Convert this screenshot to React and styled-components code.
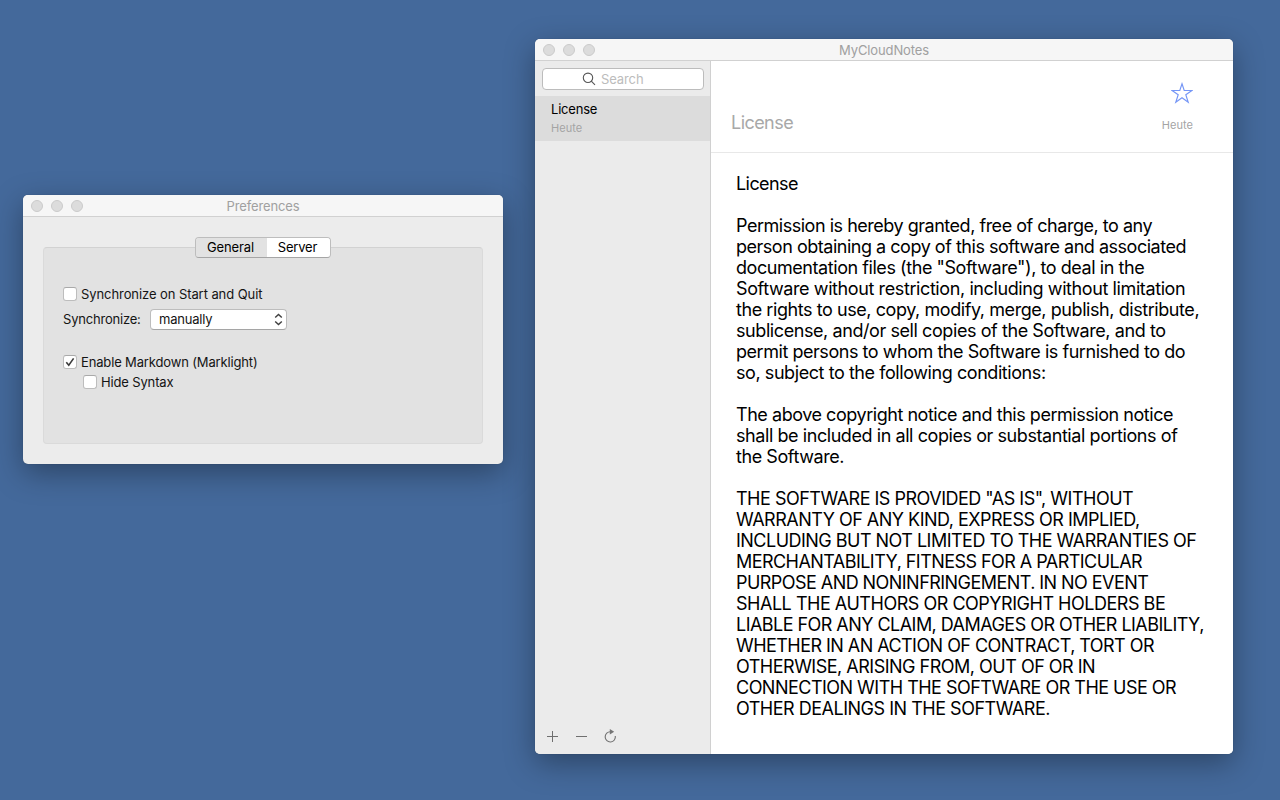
import React from 'react';
import styled, { createGlobalStyle } from 'styled-components';

const GlobalStyle = createGlobalStyle`
  * { box-sizing: border-box; }
  body {
    margin: 0;
    background: #44699b;
    font-family: Inter, "Liberation Sans", sans-serif;
    font-size: 13px;
    color: #000;
    overflow: hidden;
  }
`;

const Desktop = styled.main`
  position: relative;
  width: 1280px;
  height: 800px;
  background: #44699b;
  overflow: hidden;
`;

const Window = styled.section`
  position: absolute;
  left: ${(p) => p.$x}px;
  top: ${(p) => p.$y}px;
  width: ${(p) => p.$w}px;
  height: ${(p) => p.$h}px;
  display: flex;
  flex-direction: column;
  background: #ececec;
  border-radius: 5px;
  box-shadow: 0 0 1px rgba(0, 0, 0, 0.3), 0 9px 30px rgba(0, 0, 0, 0.34);
`;

const TitleBar = styled.header`
  flex: none;
  height: 22px;
  display: grid;
  grid-template-columns: 60px 1fr 60px;
  align-items: center;
  background: #f6f6f6;
  border-bottom: 1px solid #d1d1d1;
  border-radius: 5px 5px 0 0;
`;

const Lights = styled.div`
  display: flex;
  gap: 8px;
  padding-left: 8px;
`;

const Light = styled.i`
  width: 12px;
  height: 12px;
  border-radius: 50%;
  background: #dcdcdc;
  border: 1px solid #cbcbcb;
`;

const Title = styled.h1`
  margin: 0;
  font-size: 13px;
  line-height: 20px;
  font-weight: 400;
  text-align: center;
  color: #a0a0a0;
  letter-spacing: ${(p) => p.$track || 0}px;
  padding-top: 1px;
`;

const Label = styled.span`
  font-size: 13px;
  line-height: 16px;
  color: ${(p) => p.$color || '#141414'};
  letter-spacing: ${(p) => p.$track || 0}px;
  white-space: nowrap;
`;

const PrefsBody = styled.div`
  flex: 1;
  display: flex;
  flex-direction: column;
  padding: 20px 20px 20px;
`;

const Tabs = styled.div`
  display: flex;
  align-self: center;
  width: 136px;
  height: 21px;
  margin-bottom: -11px;
  border: 1px solid #bdbdbd;
  border-bottom-color: #a5a5a5;
  border-radius: 4px;
  overflow: hidden;
  z-index: 1;
`;

const Tab = styled.button`
  flex: none;
  width: ${(p) => p.$w}px;
  padding: 0 2px 0 0;
  border: 0;
  font: 400 13px/19px Inter, "Liberation Sans", sans-serif;
  letter-spacing: ${(p) => p.$track}px;
  color: #000;
  background: ${(p) => (p.$active ? '#e2e2e2' : '#fff')};
`;

const GroupBox = styled.div`
  flex: 1;
  padding: 38px 19px 0;
  background: #e2e2e2;
  border: 1px solid #dadada;
  border-top-color: #d2d2d2;
  border-radius: 4px;
`;

const CheckRow = styled.label`
  display: flex;
  align-items: center;
  gap: 4px;
  height: 16px;
  margin-top: ${(p) => p.$top || 0}px;
  padding-left: ${(p) => p.$indent || 0}px;
`;

const CheckBox = styled.span`
  display: flex;
  width: 14px;
  height: 14px;
  background: #fff;
  border: 1px solid #bdbdbd;
  border-top-color: #a9a9a9;
  border-radius: 3px;
`;

const SelectRow = styled.div`
  display: flex;
  justify-content: space-between;
  align-items: center;
  width: 224px;
  height: 21px;
  margin-top: 7px;

  ${Label} {
    margin-bottom: 1px;
  }
`;

const Select = styled.div`
  display: flex;
  align-items: center;
  justify-content: space-between;
  width: 137px;
  height: 21px;
  padding: 0 3px 0 8px;
  background: #fff;
  border: 1px solid #bdbdbd;
  border-bottom-color: #a5a5a5;
  border-radius: 4px;
`;

const Columns = styled.div`
  flex: 1;
  display: flex;
  min-height: 0;
`;

const Sidebar = styled.aside`
  flex: none;
  width: 176px;
  display: flex;
  flex-direction: column;
  background: #ebebeb;
  border-right: 1px solid #d0d0d0;
  border-radius: 0 0 0 5px;
`;

const SearchField = styled.div`
  flex: none;
  display: flex;
  align-items: center;
  gap: 5px;
  width: 162px;
  height: 22px;
  margin: 7px 0 6px 7px;
  padding-left: 39px;
  background: #fff;
  border: 1px solid #bcbcbc;
  border-radius: 4px;
`;

const NoteItem = styled.div`
  flex: none;
  display: flex;
  flex-direction: column;
  gap: 4px;
  height: 45px;
  padding: 5px 16px 0;
  background: #dcdcdc;
`;

const Small = styled.span`
  font-size: 11px;
  line-height: 14px;
  color: #a4a4a4;
  letter-spacing: 0.05px;
`;

const Tools = styled.div`
  display: flex;
  gap: 15px;
  margin-top: auto;
  padding: 0 0 10px 10px;
`;

const Editor = styled.article`
  flex: 1;
  display: flex;
  flex-direction: column;
  background: #fff;
  border-radius: 0 0 5px 0;
`;

const NoteHeader = styled.header`
  flex: none;
  display: flex;
  justify-content: space-between;
  height: 92px;
  padding: 0 40px 0 20px;
  border-bottom: 1px solid #e8e8e8;
`;

const NoteTitle = styled.h2`
  margin: 51px 0 0;
  font-size: 18px;
  line-height: 22px;
  font-weight: 400;
  color: #a8a8a8;
  letter-spacing: ${(p) => p.$track}px;
`;

const Meta = styled.div`
  display: flex;
  flex-direction: column;
  align-items: flex-end;
  gap: 14px;
  padding-top: 21px;
`;

const NoteText = styled.div`
  padding: 20px 0 0 25px;
`;

const Paragraph = styled.p`
  margin: 0 0 21px;
`;

const Line = styled.span`
  display: block;
  width: max-content;
  font-size: 18px;
  line-height: 21px;
  white-space: pre;
  letter-spacing: ${(p) => p.$track}px;
`;

// Each line of the note with its letter spacing in pixels.
const paragraphs = [
  [['License', -0.57]],
  [
    ['Permission is hereby granted, free of charge, to any', -0.48],
    ['person obtaining a copy of this software and associated', -0.48],
    ['documentation files (the "Software"), to deal in the', -0.44],
    ['Software without restriction, including without limitation', -0.4],
    ['the rights to use, copy, modify, merge, publish, distribute,', -0.43],
    ['sublicense, and/or sell copies of the Software, and to', -0.42],
    ['permit persons to whom the Software is furnished to do', -0.46],
    ['so, subject to the following conditions:', -0.43],
  ],
  [
    ['The above copyright notice and this permission notice', -0.46],
    ['shall be included in all copies or substantial portions of', -0.43],
    ['the Software.', -0.43],
  ],
  [
    ['THE SOFTWARE IS PROVIDED "AS IS", WITHOUT', -0.5],
    ['WARRANTY OF ANY KIND, EXPRESS OR IMPLIED,', -0.51],
    ['INCLUDING BUT NOT LIMITED TO THE WARRANTIES OF', -0.52],
    ['MERCHANTABILITY, FITNESS FOR A PARTICULAR', -0.55],
    ['PURPOSE AND NONINFRINGEMENT. IN NO EVENT', -0.55],
    ['SHALL THE AUTHORS OR COPYRIGHT HOLDERS BE', -0.48],
    ['LIABLE FOR ANY CLAIM, DAMAGES OR OTHER LIABILITY,', -0.54],
    ['WHETHER IN AN ACTION OF CONTRACT, TORT OR', -0.55],
    ['OTHERWISE, ARISING FROM, OUT OF OR IN', -0.5],
    ['CONNECTION WITH THE SOFTWARE OR THE USE OR', -0.52],
    ['OTHER DEALINGS IN THE SOFTWARE.', -0.49],
  ],
];

const TrafficLights = () => (
  <Lights><Light /><Light /><Light /></Lights>
);

function Preferences() {
  return (
    <Window $x={23} $y={195} $w={480} $h={269}>
      <TitleBar>
        <TrafficLights />
        <Title $track={-0.12}>Preferences</Title>
      </TitleBar>
      <PrefsBody>
        <Tabs>
          <Tab $active $w={71} $track={-0.12}>General</Tab>
          <Tab $w={63} $track={-0.2}>Server</Tab>
        </Tabs>
        <GroupBox>
          <CheckRow>
            <CheckBox />
            <Label $track={-0.08}>Synchronize on Start and Quit</Label>
          </CheckRow>
          <SelectRow>
            <Label $track={-0.2}>Synchronize:</Label>
            <Select>
              <Label $track={-0.2}>manually</Label>
              <svg width="9" height="13" viewBox="0 0 9 13" fill="none" stroke="#404040" strokeWidth="1.4">
                <path d="M1.2 4.6 4.5 1.4 7.8 4.6M1.2 8.4 4.5 11.6 7.8 8.4" />
              </svg>
            </Select>
          </SelectRow>
          <CheckRow $top={24}>
            <CheckBox>
              <svg width="12" height="12" viewBox="0 0 12 12" fill="none" stroke="#3a3a3a" strokeWidth="1.6">
                <path d="M2.3 6.2 4.8 9.2 9.6 2.4" />
              </svg>
            </CheckBox>
            <Label $track={-0.15}>Enable Markdown (Marklight)</Label>
          </CheckRow>
          <CheckRow $top={4} $indent={20}>
            <CheckBox />
            <Label $track={-0.15}>Hide Syntax</Label>
          </CheckRow>
        </GroupBox>
      </PrefsBody>
    </Window>
  );
}

function Notes() {
  return (
    <Window $x={535} $y={39} $w={698} $h={715}>
      <TitleBar>
        <TrafficLights />
        <Title $track={-0.12}>MyCloudNotes</Title>
      </TitleBar>
      <Columns>
        <Sidebar>
          <SearchField>
            <svg width="14" height="14" viewBox="0 0 14 14" fill="none" stroke="#555" strokeWidth="1.1">
              <circle cx="6" cy="5.8" r="4.7" />
              <path d="M9.3 9.2 13 12.9" />
            </svg>
            <Label $color="#bcbcbc" $track={-0.1}>Search</Label>
          </SearchField>
          <NoteItem>
            <Label $color="#000" $track={-0.2}>License</Label>
            <Small>Heute</Small>
          </NoteItem>
          <Tools>
            <svg width="14" height="15" viewBox="0 0 14 15" fill="none" stroke="#6f6f6f">
              <path d="M2 7.5H13M7.5 2V13" />
            </svg>
            <svg width="14" height="15" viewBox="0 0 14 15" fill="none" stroke="#6f6f6f">
              <path d="M2 7.5H13" />
            </svg>
            <svg width="14" height="15" viewBox="0 0 14 15" fill="none" stroke="#747474" strokeWidth="1.15">
              <path d="M7.6 2.8A5.1 5.1 0 1 0 12.3 7" />
              <path d="M6.8 0 11.2 2.8 6.8 5.5Z" fill="#747474" stroke="none" />
            </svg>
          </Tools>
        </Sidebar>
        <Editor>
          <NoteHeader>
            <NoteTitle $track={-0.55}>License</NoteTitle>
            <Meta>
              <svg width="22" height="22" viewBox="0 0 22 22" fill="none" stroke="#7596f6" strokeWidth="1.15">
                <path d="M11 1.8 13.2 8.5H20.9L14.8 12.8 17.2 20.3 11 15.7 4.8 20.3 7.2 12.8 1.1 8.5H8.8Z" />
              </svg>
              <Small>Heute</Small>
            </Meta>
          </NoteHeader>
          <NoteText>
            {paragraphs.map((lines, i) => (
              <Paragraph key={i}>
                {lines.map(([text, track]) => (
                  <Line key={text} $track={track}>{text}</Line>
                ))}
              </Paragraph>
            ))}
          </NoteText>
        </Editor>
      </Columns>
    </Window>
  );
}

export default function App() {
  return (
    <>
      <GlobalStyle />
      <Desktop>
        <Preferences />
        <Notes />
      </Desktop>
    </>
  );
}
